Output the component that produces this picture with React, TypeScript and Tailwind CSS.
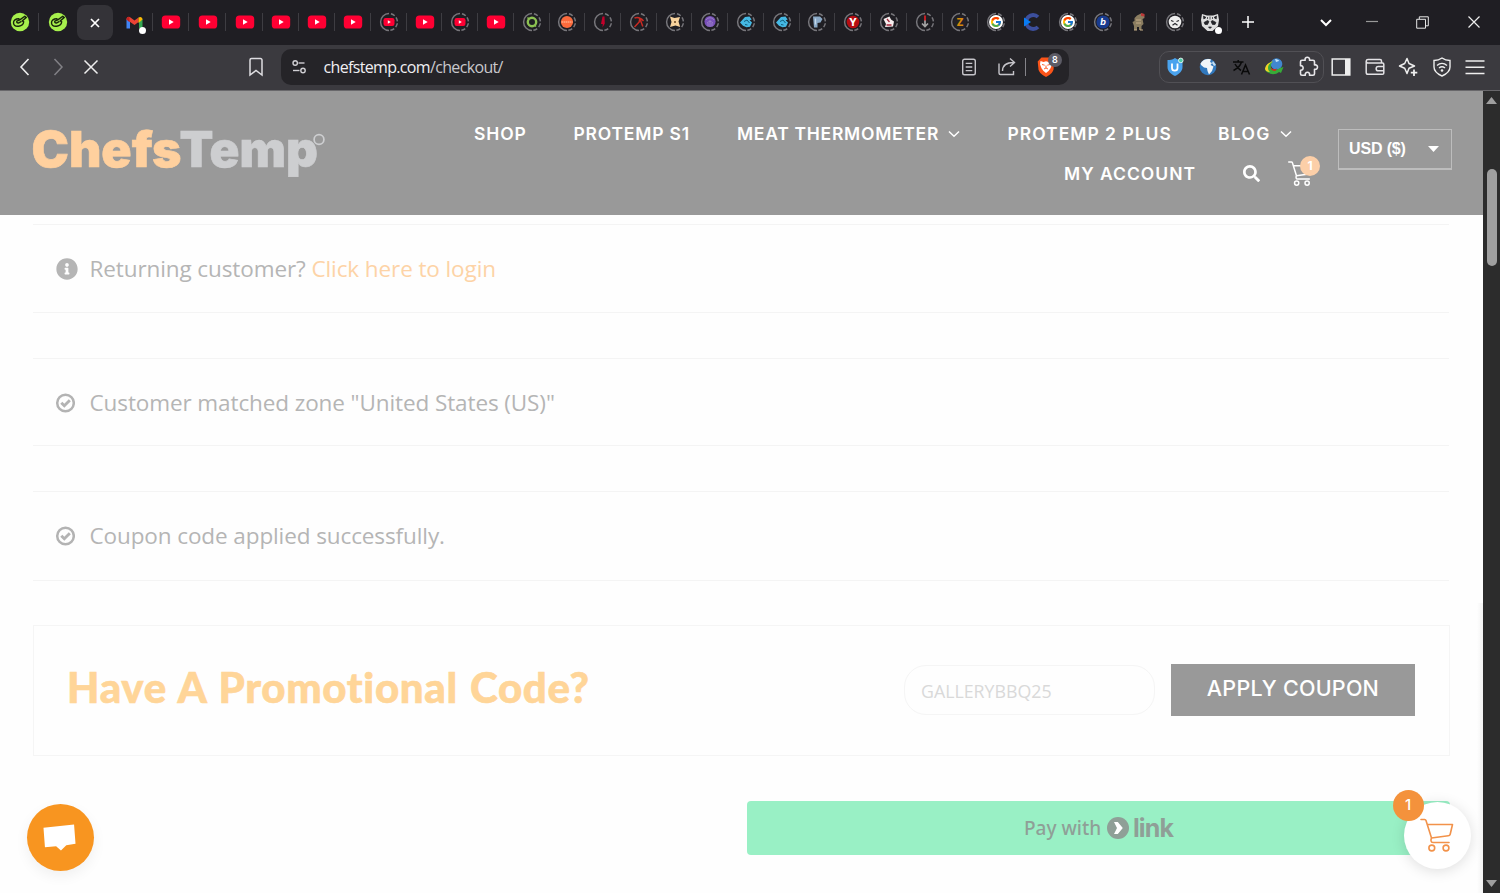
import type { ReactNode } from "react";
import { FaInfoCircle, FaSearch } from "react-icons/fa";
import { FcGoogle } from "react-icons/fc";

const Svg = ({ children, size = 20 }: { children: ReactNode; size?: number }) => (
  <svg width={size} height={size} viewBox="0 0 20 20" fill="none" className="shrink-0">
    {children}
  </svg>
);

// sleeping tabs get a ring, solid on the left and dashed on the right
const Ring = ({ children }: { children: ReactNode }) => (
  <Svg>
    <path d="M10 1.600A8.400 8.400 0 0 0 10 18.400" stroke="#77767b" strokeWidth="1.500" />
    <path d="M10 1.600A8.400 8.400 0 0 1 10 18.400" stroke="#77767b" strokeWidth="1.500" strokeDasharray="4.200 2" strokeDashoffset="-2" />
    {children}
  </Svg>
);

const Lime = () => (
  <Svg>
    <circle cx="10" cy="10" r="9.200" fill="#a6f04c" />
    <path d="M9.500 6.800C5.500 6.500 3.300 8.500 3.500 11c.3 2.500 2.700 3.500 5.300 3.200 2.900-.4 4.700-2 4.900-4.400l-1.400-.9 4-3.400-1.500-1.200-5 3.600-3 1.300c-.5 1.300.7 2.100 2 1.600l2.700-1.500" stroke="#18240c" strokeWidth="1.400" strokeLinejoin="round" />
  </Svg>
);

const Gmail = () => (
  <svg width="22" height="24" viewBox="0 0 22 24" className="-mb-[3px] ml-[3px] shrink-0">
    <path d="M2.500 7v9.500h3.500V9.500z" fill="#4285f4" />
    <path d="M15 9.500v7h3.500V7z" fill="#34a853" />
    <path d="M2.500 7.500C2.500 4.800 5 4.200 6.500 5.500l4 3 4-3v4.400l-4 3-8-5.400z" fill="#ea4335" />
    <path d="M14.500 5.500c1.800-1.300 4-.5 4 2l-4 3.500z" fill="#fbbc04" />
    <path d="M2.500 7.500c0-2.200 1.500-2.800 3-2.300v5z" fill="#c5221f" />
    <circle cx="18.500" cy="18.500" r="3.500" fill="#fff" />
  </svg>
);

const YT = () => (
  <Svg>
    <rect x=".8" y="3.600" width="18.400" height="12.900" rx="3.600" fill="#ff0033" />
    <path d="M8 7.300v5.400l4.700-2.700z" fill="#fff" />
  </Svg>
);

const YTRing = () => (
  <Ring>
    <rect x="4.500" y="6.100" width="11" height="7.800" rx="2.200" fill="#ff0033" />
    <path d="M8.800 8.300v3.400l3-1.700z" fill="#fff" />
  </Ring>
);

const Letter = ({ bg, fg, ch }: { bg: string; fg: string; ch: string }) => (
  <Ring>
    <circle cx="10" cy="10" r="6.300" fill={bg} />
    <text x="10" y="13.800" textAnchor="middle" fontSize="10.500" fontWeight="800" fontFamily="Inter, sans-serif" fill={fg}>{ch}</text>
  </Ring>
);

const Bird = () => (
  <Ring>
    <path d="M4 10.500 9 5l4.500-.5 2.200 3-2 .8 2.300 2.200-2 4.300-3.500.4-3.500-1.500z" fill="#45b9e4" />
    <path d="m8 9.500 3-1.500 2.500 3M9 12.500l2.500.5" stroke="#155f7c" strokeWidth="1" />
  </Ring>
);

const Google = () => (
  <div className="relative flex size-5 items-center justify-center">
    <Ring><circle cx="10" cy="10" r="7" fill="#fff" /></Ring>
    <FcGoogle className="absolute size-[12px]" />
  </div>
);

const tabs: ReactNode[] = [
  <YTRing />,
  <YT />,
  <YTRing />,
  <YT />,
  <Ring>
    <circle cx="10" cy="10" r="4.200" stroke="#8cc152" strokeWidth="2.400" />
    <path d="m5.500 5.500 1.500 1.500M14 14.500l-1.500-1.500" stroke="#8cc152" strokeWidth="1.500" />
  </Ring>,
  <Ring>
    <circle cx="10" cy="10" r="6.100" fill="#fb6a3c" />
    <path d="M4.500 10h11" stroke="#ffc3a2" strokeWidth="1.100" strokeDasharray="1.500 .5" />
  </Ring>,
  <Ring><path d="M9.500 4.500h2l.3 7-2.300 4 .3-3.500H8z" fill="#c4002b" /></Ring>,
  <Ring><path d="M5.500 6c3-1 6-.5 9 3M11 5.500l-.8 4.500-4.700 5M11 7l2.800 7.500" stroke="#c92a22" strokeWidth="1.500" /></Ring>,
  <Ring>
    <path d="m5 4.500 4.500 1.500 5.500-1-1.500 4.500 1.700 5.500-4.700-1.500-5.500 1.500 1.500-5z" fill="#f8d39d" />
    <path d="m9 9 2 2M11 9l-2 2" stroke="#6d4a25" strokeWidth=".8" />
  </Ring>,
  <Ring>
    <circle cx="10" cy="9.500" r="5.600" fill="#7950b9" />
    <path d="M6 8c2-3 6-3 8 0M7 11c2-2 4-2 6 0M8 14.500V11M12 14.500V11M10 15V8" stroke="#a08bc8" strokeWidth=".8" />
  </Ring>,
  <Bird />,
  <Bird />,
  <Ring><path d="M6 4.500h7l2.500 2.500-2 3.500-3 .5v4.500H7z" fill="#8aa9c6" /><path d="M8.500 6.500v6" stroke="#c3d8ea" strokeWidth="1.300" /></Ring>,
  <Letter bg="#b70d12" fg="#fff" ch="Y" />,
  <Ring>
    <path d="m4.500 7 6-2.500 1.500 3 3 2-1 5-8 .5 1-3z" fill="#f7eeee" />
    <path d="m8 7 2.500 3M7.500 13h5" stroke="#a3263a" strokeWidth="1.300" />
  </Ring>,
  <Ring><path d="M10 8v7M7 11.500l3 3 3-3" stroke="#a5a5a5" strokeWidth="1.700" /><path d="M10 3.500v5" stroke="#d21f24" strokeWidth="1.800" /></Ring>,
  <Letter bg="#242127" fg="#d58a0c" ch="Z" />,
  <Google />,
  <Svg>
    <path d="M16 5A7 7 0 1 0 16 15" stroke="#3c4f9d" strokeWidth="3.800" />
    <path d="m2 5.500 7 4.500-7 4.500z" fill="#087cf5" />
  </Svg>,
  <Google />,
  <Ring>
    <circle cx="10" cy="10" r="6.600" fill="#183b8f" />
    <text x="10" y="13.200" textAnchor="middle" fontSize="9" fontWeight="700" fontStyle="italic" fontFamily="Inter, sans-serif" fill="#fff">b</text>
  </Ring>,
  <Svg>
    <path d="M8 3.500 12 1.500l3 .5.500 4-2 1 1 5-2 2v4h-2.500v-3H8v3H5v-4l-1.500-4 2-1V6z" fill="#8b7d60" />
    <path d="m12 1 3.500 1v2.500L12 4z" fill="#bd3938" />
    <path d="M7 8h5M7 11h5M5 18h3M11 18h3" stroke="#c5ad87" />
  </Svg>,
  <Ring>
    <circle cx="10" cy="10" r="6.300" fill="#eee" />
    <path d="m6 8.500 2.500 1M14 8.500l-2.500 1M7.500 13.300l2.500-1.800 2.500 1.800" stroke="#29292e" strokeWidth="1.200" />
  </Ring>,
  <svg width="22" height="24" viewBox="0 0 22 24" className="-mb-[3px] ml-[2px] shrink-0">
    <path d="m2 2 5 1.500h6L18 2l1 6-1 6-5.500 5h-5L2 14 1 8z" fill="#dedede" />
    <path d="m3.500 4 2.500 1.500L3.800 7zM16.500 4 14 5.500 16.200 7zM4 10.500l3.500-2 1.500 1-1.500 3H5zM16 10.500l-3.500-2-1.500 1 1.500 3H15zM8.500 15h3L10 16.500zM10 4.500v3M7.500 5v2M12.500 5v2" fill="#242429" stroke="#242429" strokeWidth=".7" />
    <circle cx="18.500" cy="18.500" r="3.500" fill="#fff" />
  </svg>,
];

function Tab({ w, children, sep = true }: { w: string; children: ReactNode; sep?: boolean }) {
  return (
    <div className={`${w} flex h-full shrink-0 items-center`}>
      <div className="flex flex-1 justify-center">{children}</div>
      {sep && <div className="-ml-px h-[18px] w-px bg-[#3e3d42]" />}
    </div>
  );
}

function TabStrip() {
  return (
    <div className="flex h-[45px] bg-[#1f1e23] pb-px">
      <Tab w="w-[39px]"><Lime /></Tab>
      <Tab w="w-[37px]" sep={false}><Lime /></Tab>
      <div className="mt-[5px] ml-px flex h-[35px] w-9 items-center justify-center rounded-lg bg-[#343338]">
        <Svg><path d="m6 6 8 8M14 6l-8 8" stroke="#fff" strokeWidth="1.700" /></Svg>
      </div>
      <Tab w="w-[40px]"><Gmail /></Tab>
      <Tab w="w-[36px]"><YT /></Tab>
      <Tab w="w-[37px]"><YT /></Tab>
      <Tab w="w-[37px]"><YT /></Tab>
      <Tab w="w-[36px]"><YT /></Tab>
      <Tab w="w-[36px]"><YT /></Tab>
      <Tab w="w-[36px]"><YT /></Tab>
      {tabs.map((icon, i) => <Tab key={i} w="w-[35.730px]">{icon}</Tab>)}
      <div className="flex items-center pl-[10px]">
        <Svg><path d="M10 4v12M4 10h12" stroke="#fff" strokeWidth="1.500" /></Svg>
      </div>
      <div className="ml-auto flex items-center pr-5">
        <Svg><path d="m5 8 5 5 5-5" stroke="#fff" strokeWidth="2" /></Svg>
        <svg width="12" height="12" viewBox="0 0 12 12" className="ml-[30px]"><path d="M0 5.500h12" stroke="#999" strokeWidth="1.200" /></svg>
        <svg width="13" height="13" viewBox="0 0 13 13" className="ml-[38px]" fill="none" stroke="#e6e6e6">
          <path d="M.7 3.300h8.800v8.900H.7zM3.300 3V.8h9v9H10" />
        </svg>
        <svg width="12" height="12" viewBox="0 0 12 12" className="ml-[39px]"><path d="m.5.5 11 11M11.500.5l-11 11" stroke="#eee" strokeWidth="1.200" /></svg>
      </div>
    </div>
  );
}

function Toolbar() {
  return (
    <div className="flex h-[46px] items-center border-b border-[#69686b] bg-[#3b3a3f] pb-px text-[#dedde1]">
      <div className="flex w-[281px] items-center pl-[15px]">
        <Svg><path d="M13.500 2 6 10l7.500 8" stroke="#eee" strokeWidth="1.600" /></Svg>
        <div className="ml-[13px] flex"><Svg><path d="M6.500 2 14 10l-7.500 8" stroke="#828186" strokeWidth="1.500" /></Svg></div>
        <div className="ml-[13px] flex"><Svg><path d="m3.500 3.500 13 13M16.500 3.500l-13 13" stroke="#eee" strokeWidth="1.500" /></Svg></div>
        <svg width="16" height="20" viewBox="0 0 16 20" fill="none" className="ml-[147px]">
          <path d="M2 3a1.500 1.500 0 0 1 1.500-1.500h9A1.500 1.500 0 0 1 14 3v15l-6-4.500L2 18z" stroke="#dedde1" strokeWidth="1.500" />
        </svg>
      </div>
      <div className="flex h-9 w-[788px] items-center rounded-[10px] bg-[#252428]">
        <svg width="16" height="16" viewBox="0 0 16 16" fill="none" stroke="#d0cfd3" strokeWidth="1.400" className="ml-[10px]">
          <circle cx="4.200" cy="4" r="2.200" /><path d="M7.500 4h6" /><circle cx="12" cy="11.500" r="2.200" /><path d="M2 11.500h6.500" />
        </svg>
        <div className="ml-[16.500px] font-['Open_Sans'] text-[16px] leading-6 tracking-[-0.660px] text-[#f0eff2]">
          chefstemp.com<span className="text-[#c9c8cc]">/checkout/</span>
        </div>
        <svg width="16" height="18" viewBox="0 0 16 18" fill="none" stroke="#c5c4c9" strokeWidth="1.400" className="ml-auto">
          <rect x="1.700" y="1.200" width="12.600" height="15.600" rx="1.800" /><path d="M4.700 5.400h6.600M4.700 9h6.600M4.700 12.600h6.600" />
        </svg>
        <svg width="20" height="20" viewBox="0 0 20 20" fill="none" stroke="#c5c4c9" strokeWidth="1.400" className="ml-[20px]">
          <path d="M2 6.500V16a1.500 1.500 0 0 0 1.500 1.500h13V14M5.500 14c0-5.500 3.500-8.500 11.500-8.500M13 1.500l4.500 4-4.500 4" />
        </svg>
        <div className="ml-[8px] h-[18px] w-px bg-[#85848a]" />
        <div className="relative mr-[11px] ml-[10px]">
          <svg width="22" height="22" viewBox="0 0 22 22">
            <path d="M5.500 1.500h9l3.500 4-.5 8c-.8 3.500-4 5.500-7.500 7.500C6.500 19 3.300 17 2.500 13.500l-.8-8z" fill="#fb5419" />
            <path d="m4.500 5 3 1 2.500-.7L12.500 6l3-1 .5 3.200-1.500 4.100-2 2.700L10 17l-2.500-2-2-2.700L4 8.200z" fill="#fff" />
            <path d="m6 8.500 2.700.7M14 8.500l-2.700.7M8 13l2-1 2 1M10 12V9.500" stroke="#fb5419" strokeWidth=".9" fill="none" />
          </svg>
          <span className="absolute -top-[3px] left-[12px] flex size-[14px] items-center justify-center rounded-full bg-[#5d5c66] font-[Inter] text-[9px] font-semibold text-white">8</span>
        </div>
      </div>
      <div className="ml-[90px] flex h-8 w-[165px] items-center rounded-[10px] border border-[#515055]">
        <div className="ml-[5px] flex">
          <Svg>
            <path d="M10 1c3 2 5 2 7.500 2v7c0 4-3 7-7.500 9-4.500-2-7.500-5-7.500-9V3C5 3 7 3 10 1Z" fill="#4aa3ee" />
            <path d="M7 6.500V11c0 3.600 5.500 3.600 5.500 0V6.500" stroke="#fff" strokeWidth="1.800" />
            <circle cx="15.800" cy="3.400" r="2.300" fill="#4ec9a5" stroke="#fff" strokeWidth=".8" />
          </Svg>
        </div>
        <div className="ml-[13px] flex">
          <Svg>
            <circle cx="10" cy="10" r="8.300" fill="#3178bd" />
            <path d="M2.500 6.500C5 2.500 9 1.200 13 2.500L12 5l2 1-1.500 2 3 1.500L14 14l-3 3.500-1.500-3.500L9 11l-3-.5L3 8z" fill="#f1f5f8" />
            <path d="m15 4 3 4-2 1-2-3z" fill="#c8dff2" />
          </Svg>
        </div>
        <div className="ml-[13px] flex">
          <Svg>
            <path d="M2 5h10.500M7.200 3v2M10.500 5C9.500 8.500 6.500 11.500 2.500 13.500M4 7c1.500 3 3.500 5 6 6.500M10.500 17.500l4-9.500 4 9.500M12 14.500h5" stroke="#0a0a0a" strokeWidth="1.500" />
          </Svg>
        </div>
        <div className="ml-[13px] flex">
          <Svg>
            <circle cx="12.500" cy="7" r="5.800" fill="#4287ce" />
            <path d="M11 2c2 0 4 1 4 2l-3 1z" fill="#c5e6f8" />
            <path d="M1 11.500C2 7.500 5 5 9 4.500 6.500 7 6 10 8 12c2 1.500 5 1 8-1l3.500-1L17 16l-2-1c-3 2.500-7 3-10 1-2.500-1-4-2.500-4-4.500Z" fill="#37ab39" />
            <path d="M1 11.500C2 7.500 5 5 9 4.500c-3 1.500-5 3.500-5 6.500 0 2 1 3 2 4-3 0-5-1.500-5-3.500Z" fill="#f2cf27" />
            <path d="M6 10c2 2.500 5 2.500 7 1.500l-1.500 2.500C9 14.500 7 13 6 10z" fill="#c92e22" />
          </Svg>
        </div>
        <div className="ml-[13px] flex">
          <svg width="22" height="22" viewBox="0 0 22 22" fill="none" stroke="#e8e7ea" strokeWidth="1.600">
            <path d="M5 4.200h3.200c-1.200-4 5.300-4 4.300 0H16a1.500 1.500 0 0 1 1.500 1.500V9c4-1.200 4 5.200 0 4.200v4.500a1.500 1.500 0 0 1-1.500 1.500h-3.500c1-4-5-4-4.200 0H5a1.500 1.500 0 0 1-1.500-1.500v-3.500c3.500.5 3.500-5 0-4.500V5.700A1.500 1.500 0 0 1 5 4.200z" strokeLinejoin="round" />
          </svg>
        </div>
      </div>
      <div className="ml-[7px] flex flex-1 items-center gap-[13.500px]">
        <Svg><path d="M1.200 2h17.600v16H1.200z" stroke="#eee" strokeWidth="1.500" /><path d="M14 2h5v16h-5z" fill="#eee" /></Svg>
        <Svg>
          <path d="M16.500 6V4a1.500 1.500 0 0 0-1.500-1.500H3A1.800 1.800 0 0 0 1.200 4v11.500A1.800 1.800 0 0 0 3 17.300h14.500a1.300 1.300 0 0 0 1.300-1.300V7.300A1.300 1.300 0 0 0 17.500 6H3a1.700 1.700 0 0 1-1.700-1.700M18.800 9.500h-5.500a2.100 2.100 0 0 0 0 4.300h5.500" stroke="#e3e2e5" strokeWidth="1.500" />
        </Svg>
        <Svg>
          <path d="M9 1.500 11 6.500 16.500 9 11 11.300 9 16.500 6.700 11.300 1.500 9 6.700 6.500Z" stroke="#eee" strokeWidth="1.500" strokeLinejoin="round" />
          <path d="M16 12.500v6.500M12.800 15.700h6.500" stroke="#3b3a3f" strokeWidth="4" />
          <path d="M16 12.500v6.500M12.800 15.700h6.500" stroke="#eee" strokeWidth="1.800" />
        </Svg>
        <Svg>
          <path d="M10 1c2 1.500 5 2.500 8 2.500V10c0 4-3.500 7-8 9-4.500-2-8-5-8-9V3.500C5 3.500 8 2.500 10 1Z" stroke="#eee" strokeWidth="1.400" />
          <path d="M5 8.500c3-2.700 7-2.700 10 0M7 11c2-1.600 4-1.600 6 0" stroke="#eee" strokeWidth="1.400" /><circle cx="10" cy="13.500" r="1.300" fill="#eee" />
        </Svg>
        <Svg><path d="M.5 4h19M.5 10.200h19M.5 16.500h19" stroke="#eee" strokeWidth="1.600" /></Svg>
      </div>
    </div>
  );
}

const Chevron = () => (
  <svg width="12" height="8" viewBox="0 0 12 8" fill="none" className="ml-[9px]"><path d="m1 1.500 5 4.800 5-4.800" stroke="#fff" strokeWidth="1.500" /></svg>
);

const Cart = ({ size, color, stroke }: { size: number; color: string; stroke: number }) => (
  <svg width={size} height={size} viewBox="0 0 34 34" fill="none" stroke={color} strokeWidth={stroke} strokeLinecap="round" strokeLinejoin="round">
    <path d="M1 1.500h3.500a1.500 1.500 0 0 1 1.500 1L11.500 20M7.200 6.500H32.500l-2.300 9.800a2 2 0 0 1-1.900 1.500L11.500 20c-.8 1.500-1 4.500 1.500 4.500h16" />
    <circle cx="11.800" cy="30" r="2.900" /><circle cx="26" cy="30" r="2.900" />
  </svg>
);

const CheckCircle = () => (
  <svg width="20" height="20" viewBox="0 0 20 20" fill="none" stroke="#b3b3b3">
    <circle cx="10.500" cy="10" r="8.300" strokeWidth="2.500" />
    <path d="m6.300 9.800 3 3 5.500-5.500" strokeWidth="2.900" />
  </svg>
);

function Header() {
  return (
    <header className="flex h-[124px] bg-[#999] font-[Inter] text-white">
      <svg width="300" height="70" viewBox="0 0 300 70" className="mt-[26px] ml-[30px] shrink-0" fontFamily="Inter, sans-serif" fontWeight="900" fontSize="49">
        <text x="1.500" y="49.500" fill="#ffd09e" stroke="#ffd09e" strokeWidth=".6" textLength="150" lengthAdjust="spacingAndGlyphs">Chefs</text>
        <text x="149.500" y="49.500" fill="#cdced0" stroke="#cdced0" strokeWidth=".6" textLength="138.500" lengthAdjust="spacingAndGlyphs">Temp</text>
        <circle cx="289" cy="22.500" r="4.900" fill="none" stroke="#cdced0" strokeWidth="1.700" />
      </svg>
      <nav className="mt-[22.500px] ml-[144px] w-[846px] text-[17.500px] leading-[40px] font-semibold">
        <div className="flex">
          <span className="w-[99.500px] tracking-[0.900px]">SHOP</span>
          <span className="w-[163.500px] tracking-[0.800px] whitespace-nowrap">PROTEMP S1</span>
          <span className="flex w-[270.500px] items-center tracking-[0.730px] whitespace-nowrap">MEAT THERMOMETER<Chevron /></span>
          <span className="w-[210.500px] tracking-[1px] whitespace-nowrap">PROTEMP 2 PLUS</span>
          <span className="flex items-center tracking-[1.300px]">BLOG<Chevron /></span>
        </div>
        <div className="flex h-10 items-center pl-[590px]">
          <span className="w-[179px] tracking-[1px] whitespace-nowrap">MY ACCOUNT</span>
          <FaSearch className="size-[17px]" />
          <div className="relative ml-[28px] flex">
            <Cart size={25} color="#fff" stroke={2} />
            <span className="absolute -top-[5px] left-[12px] flex size-[20px] items-center justify-center rounded-full bg-[#fccfa8] text-[12px] leading-none font-bold">1</span>
          </div>
        </div>
      </nav>
      <div className="mt-[37.500px] ml-[18px] flex h-[41px] w-[114px] items-center border border-b-2 border-[#bdbdbd] pl-[10px] font-['Liberation_Sans'] text-[16px] font-bold">
        <span className="tracking-[-0.150px]">USD ($)</span>
        <svg width="11" height="6" viewBox="0 0 11 6" className="ml-[22px]"><path d="M0 0h11L5.500 6z" fill="#fff" /></svg>
      </div>
    </header>
  );
}

function Notice({ icon, className, children }: { icon: ReactNode; className: string; children: ReactNode }) {
  return (
    <div className={`${className} mr-[34px] ml-[33px] flex items-center border-y border-[#f4f4f4] pl-[22px] font-['Open_Sans'] text-[22.500px] tracking-[-0.100px] whitespace-nowrap text-[#b5b5b5]`}>
      <div className="w-[34.500px]">{icon}</div>
      <div>{children}</div>
    </div>
  );
}

export default function App() {
  return (
    <div className="h-[893px] w-[1500px] overflow-hidden bg-white">
      <TabStrip />
      <Toolbar />
      <div className="flex h-[802px]">
        <main className="relative w-[1483px] bg-[#fefefe]">
          <Header />
          <Notice className="mt-[9px] h-[89px]" icon={<FaInfoCircle className="ml-px size-[22px]" />}>
            Returning customer? <a className="text-[#fdd3a6]">Click here to login</a>
          </Notice>
          <Notice className="mt-[45px] h-[88px] pt-px" icon={<CheckCircle />}>
            Customer matched zone "United States (US)"
          </Notice>
          <Notice className="mt-[45px] h-[90px]" icon={<CheckCircle />}>
            Coupon code applied successfully.
          </Notice>

          <section className="mt-[44px] mr-[33px] ml-[33px] flex h-[131px] items-center border border-[#f5f5f5] pl-[33px]">
            <h2 className="mb-2 w-[837px] font-[Lato] text-[42px] leading-none font-black tracking-[0.680px] [word-spacing:1.500px] whitespace-nowrap text-[#ffd598] [-webkit-text-stroke:0.6px_#ffd598]">Have A Promotional Code?</h2>
            <div className="mb-px flex h-[50px] w-[251px] items-center rounded-[22px] border border-[#f5f5f5] pt-0.5 pl-4 font-['Open_Sans'] text-[17.800px] text-[#d9d9d9]">GALLERYBBQ25</div>
            <button className="mb-px ml-4 h-[52px] w-[244px] bg-[#999] pb-1 font-[Inter] text-[21.500px] font-medium tracking-[0.250px] whitespace-nowrap text-white">APPLY COUPON</button>
          </section>

          <div className="mt-[45px] ml-[747px] flex h-[54px] w-[703px] items-center rounded bg-[#99f0c5] pl-[277px] text-[#8f9f97]">
            <span className="w-[83px] font-['Noto_Sans'] text-[19px] font-medium whitespace-nowrap">Pay with</span>
            <svg width="22" height="22" viewBox="0 0 22 22">
              <circle cx="11" cy="11" r="11" fill="#8f9f97" />
              <path d="M7 5h3.800l5 6-5 6H7l3-6z" fill="#fff" />
            </svg>
            <span className="ml-1 font-[Inter] text-[25px] leading-none font-bold tracking-[-0.900px]">link</span>
          </div>

          <div className="absolute top-[712.500px] left-[26.500px] flex size-[67px] items-center justify-center rounded-full bg-[#f89520] shadow-[0_5px_14px_rgba(0,0,0,0.06)]">
            <svg width="33" height="28" viewBox="0 0 34 28" className="-ml-[2px]"><path d="M.5 4.500 32 1l1.500 20-9.500 1.500L18.500 28l-5-4.500-11.500 1z" fill="#fff" /></svg>
          </div>
          <div className="absolute top-[710.500px] left-[1403.500px] flex size-[67px] items-center justify-center rounded-full bg-white shadow-[0_2px_14px_rgba(0,0,0,0.13)]">
            <Cart size={34} color="#f2924a" stroke={1.6} />
          </div>
          <div className="absolute top-[699px] left-[1392.500px] flex size-[31px] items-center justify-center rounded-full bg-[#f4923c] font-[Inter] text-[15px] font-medium text-white">1</div>
          <div className="absolute right-0 bottom-0 h-[290px] w-[6px] bg-linear-to-r from-transparent to-[#f3f3f3]" />
        </main>
        <aside className="flex w-[17px] flex-col items-center bg-[#2c2c2c] pt-[6px] pb-1">
          <svg width="11" height="7" viewBox="0 0 11 7"><path d="M0 7h11L5.500 0z" fill="#9f9f9f" /></svg>
          <div className="mt-[65px] h-[97px] w-[10px] rounded-full bg-[#9f9f9f]" />
          <svg width="11" height="7" viewBox="0 0 11 7" className="mt-auto mb-0.5"><path d="M0 0h11L5.500 7z" fill="#9f9f9f" /></svg>
        </aside>
      </div>
    </div>
  );
}
